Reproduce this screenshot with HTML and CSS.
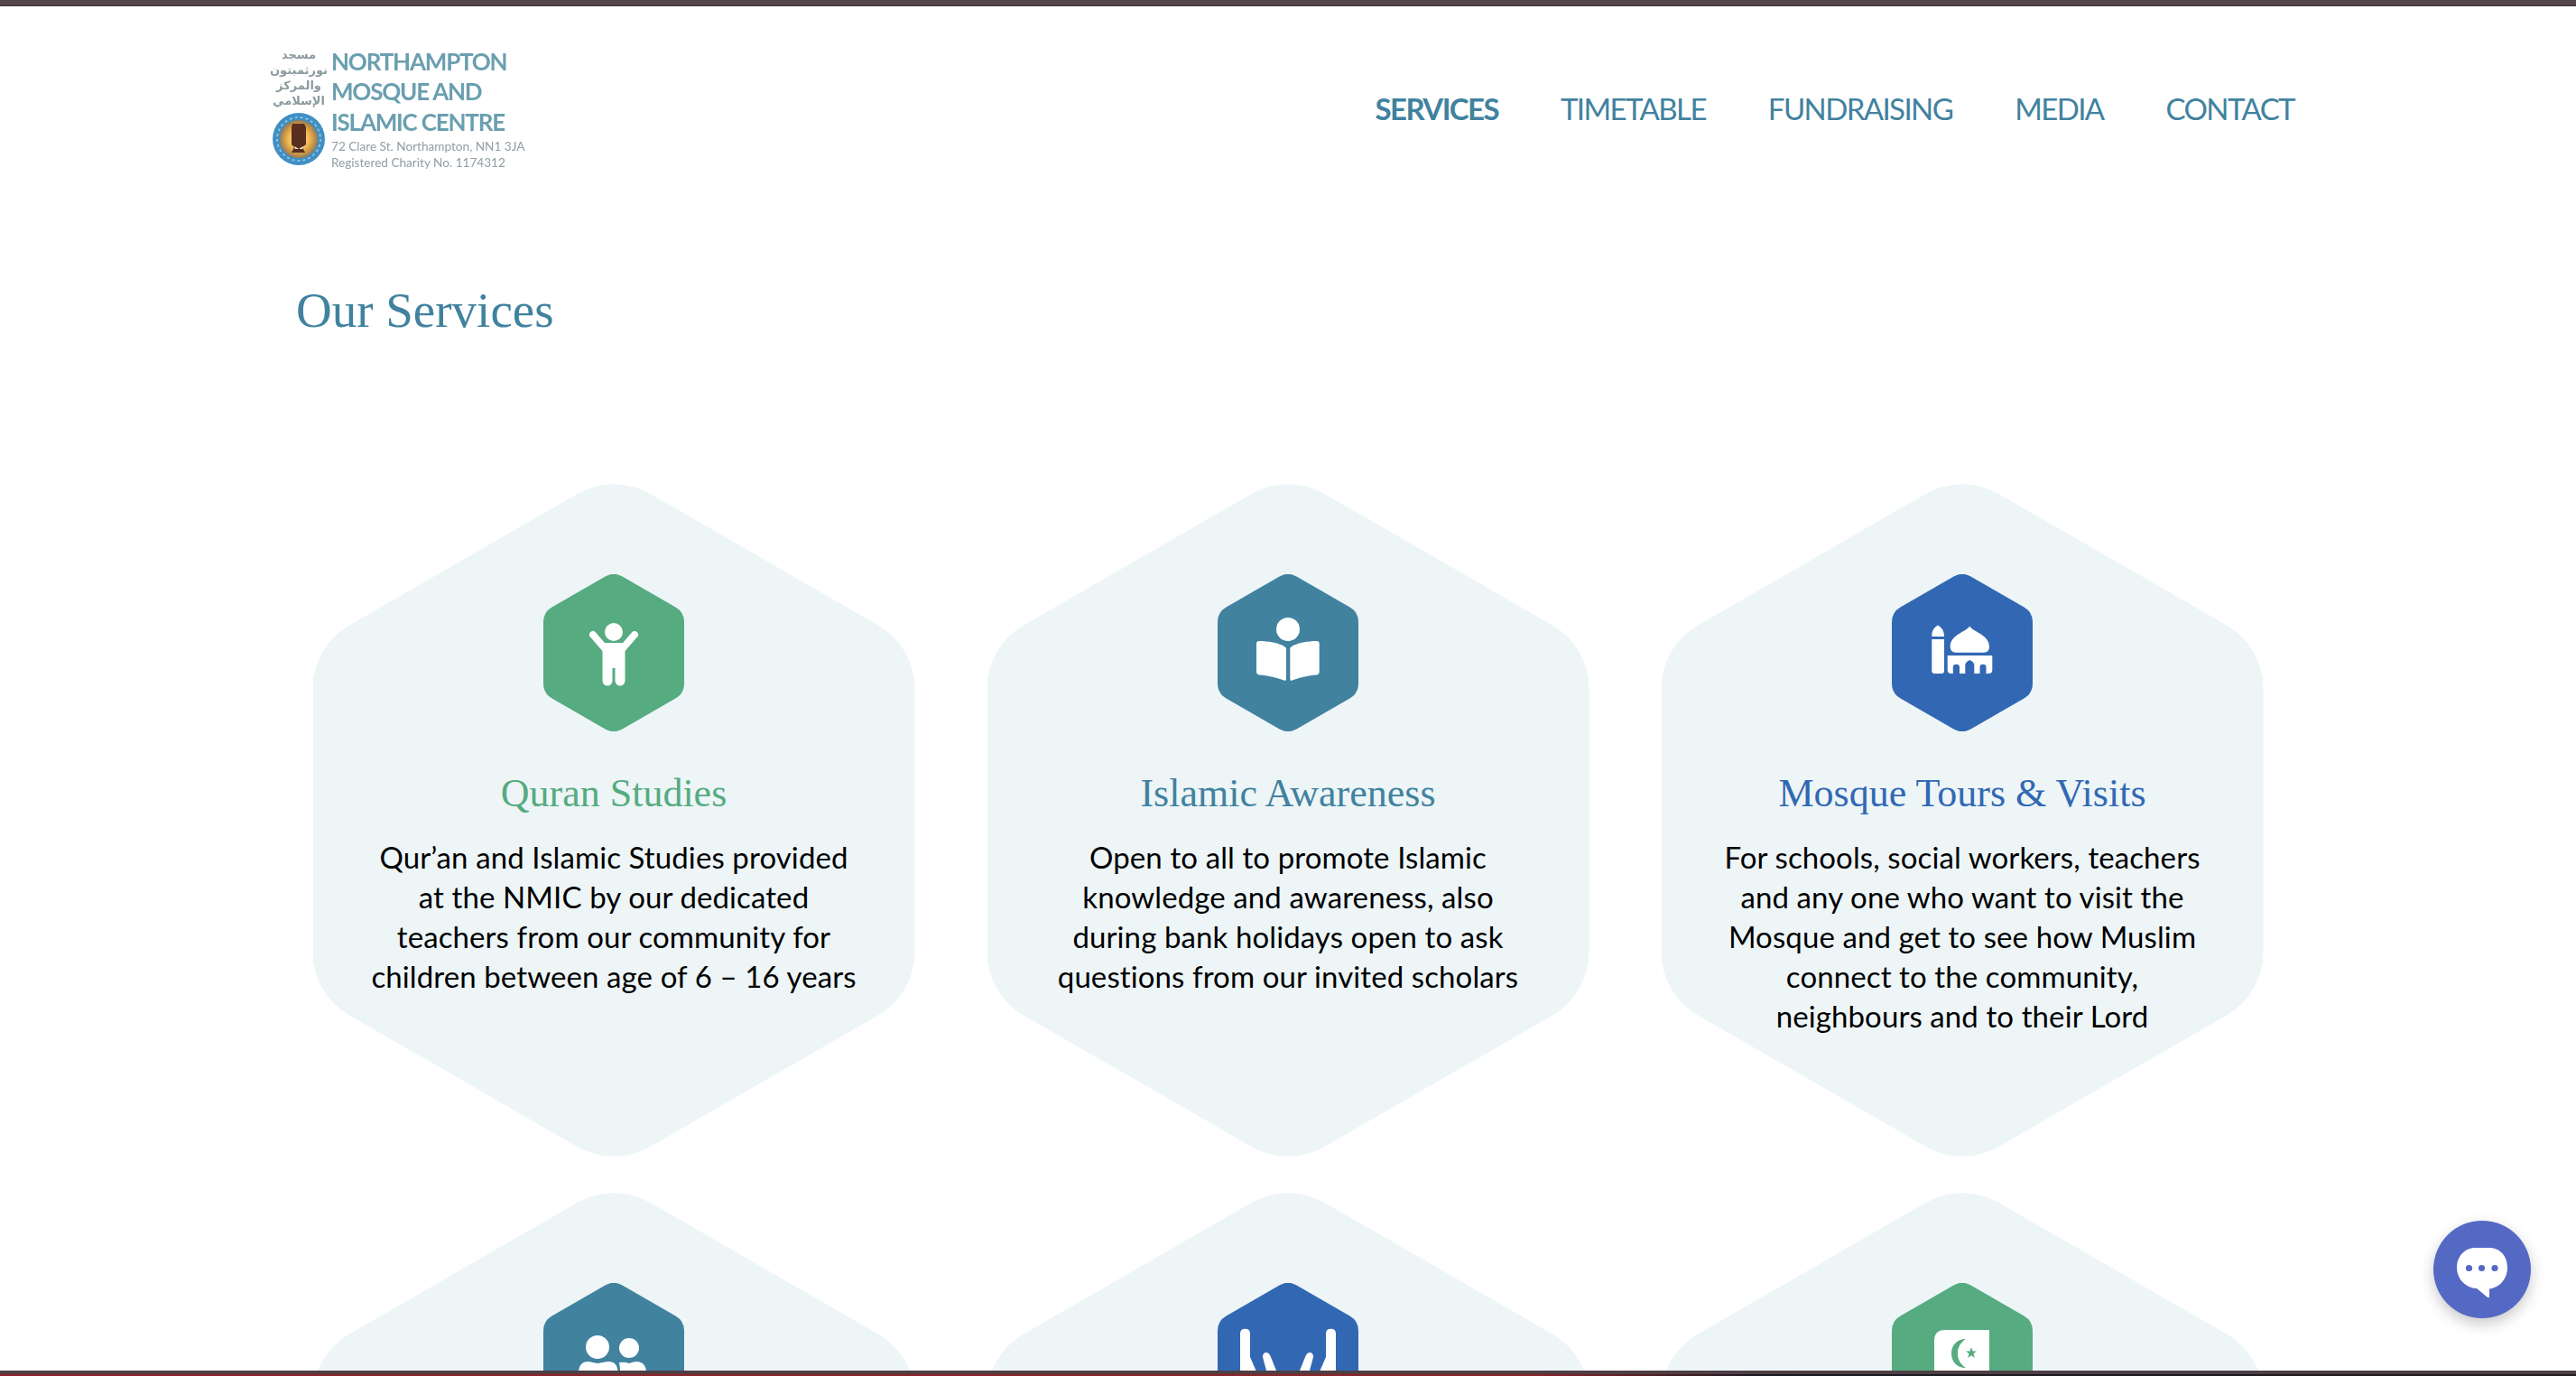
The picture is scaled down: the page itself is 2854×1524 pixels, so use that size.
FILE: index.html
```html
<!DOCTYPE html>
<html lang="en">
<head>
<meta charset="utf-8">
<title>Our Services - Northampton Mosque and Islamic Centre</title>
<link rel="stylesheet" href="styles.css">
</head>
<body>
<div class="topbar"></div>
<header class="site-header">
  <a class="logo" href="#">
    <div class="logo-left">
      <div class="logo-arabic" dir="rtl">مسجد<br>نورثمبتون<br>والمركز<br>الإسلامي</div>
      <svg class="logo-emblem" width="58" height="58" viewBox="0 0 58 58">
        <defs><radialGradient id="glow"><stop offset="0" stop-color="#fff6c4"/><stop offset=".6" stop-color="#eeb24a"/><stop offset="1" stop-color="#9c7a4e"/></radialGradient></defs>
        <circle cx="29" cy="29" r="29" fill="#3f8fc4"/>
        <circle cx="29" cy="29" r="24" fill="none" stroke="#8fc0dc" stroke-width="2" stroke-dasharray="3 3"/>
        <circle cx="29" cy="29" r="21" fill="url(#glow)"/>
        <path d="M22 12h13l2 4v19l-4 3 3 6H21l3-6-3-3V16z" fill="#5a2e1e"/>
        <path d="M24 37l5 3 5-3-1 3h-8z" fill="#f2f2ea"/>
      </svg>
    </div>
    <div class="logo-right">
      <div class="logo-name">NORTHAMPTON<br>MOSQUE AND<br>ISLAMIC CENTRE</div>
      <div class="logo-address">72 Clare St. Northampton, NN1 3JA<br>Registered Charity No. 1174312</div>
    </div>
  </a>
  <nav class="main-nav">
    <a class="nav-link active" href="#">SERVICES</a>
    <a class="nav-link" href="#">TIMETABLE</a>
    <a class="nav-link" href="#">FUNDRAISING</a>
    <a class="nav-link" href="#">MEDIA</a>
    <a class="nav-link" href="#">CONTACT</a>
  </nav>
</header>
<main class="services">
  <h1 class="page-title">Our Services</h1>
  <div class="service-grid">
    <article class="service-card">
      <svg class="hex-icon green" width="156" height="174" viewBox="0 0 156 174">
        <path class="hex-bg" d="M68.5 2.5A19 19 0 0 1 87.5 2.5L146.5 36.5A19 19 0 0 1 156 53V121A19 19 0 0 1 146.5 137.5L87.5 171.5A19 19 0 0 1 68.5 171.5L9.5 137.5A19 19 0 0 1 0 121V53A19 19 0 0 1 9.5 36.5Z"/>
        <circle class="glyph" cx="78" cy="64" r="10"/>
        <path class="glyph-line" d="M55 67 68 82M101 67 88 82"/>
        <path class="glyph" d="M65.5 76H90.5V118a5.500 5.500 0 0 1-11 0V104H76.500V118a5.500 5.500 0 0 1-11 0Z"/>
      </svg>
      <h2 class="card-title text-green">Quran Studies</h2>
      <p class="card-text">Qur’an and Islamic Studies provided<br>at the NMIC by our dedicated<br>teachers from our community for<br>children between age of 6 – 16 years</p>
    </article>
    <article class="service-card">
      <svg class="hex-icon teal" width="156" height="174" viewBox="0 0 156 174">
        <path class="hex-bg" d="M68.5 2.5A19 19 0 0 1 87.5 2.5L146.5 36.5A19 19 0 0 1 156 53V121A19 19 0 0 1 146.5 137.5L87.5 171.500A19 19 0 0 1 68.5 171.5L9.5 137.5A19 19 0 0 1 0 121V53A19 19 0 0 1 9.5 36.5Z"/>
        <circle class="glyph" cx="78" cy="61" r="13"/>
        <path class="glyph" d="M46 74C56 74 68 76 74 80Q76 81 76 83V116Q76 118.500 73.500 117.600C66 114.500 56 112 46 111.400Q43 111 43 108V77Q43 74 46 74Z"/>
        <path class="glyph" d="M110 74C100 74 88 76 82 80Q80.300 81 80.300 83V116Q80.300 118.500 82.800 117.600C90 114.500 100 112 110 111.400Q112.700 111 112.700 108V77Q112.700 74 110 74Z"/>
      </svg>
      <h2 class="card-title text-teal">Islamic Awareness</h2>
      <p class="card-text">Open to all to promote Islamic<br>knowledge and awareness, also<br>during bank holidays open to ask<br>questions from our invited scholars</p>
    </article>
    <article class="service-card">
      <svg class="hex-icon blue" width="156" height="174" viewBox="0 0 156 174">
        <path class="hex-bg" d="M68.5 2.5A19 19 0 0 1 87.5 2.5L146.5 36.5A19 19 0 0 1 156 53V121A19 19 0 0 1 146.5 137.5L87.5 171.500A19 19 0 0 1 68.5 171.5L9.5 137.5A19 19 0 0 1 0 121V53A19 19 0 0 1 9.5 36.5Z"/>
        <path class="glyph" d="M51 56.500C55 59 58 62 58 69H44.300C44.300 62 47 59 51 56.500ZM44.300 72H58V107Q58 110 55 110H47.300Q44.300 110 44.300 107Z"/>
        <path class="glyph" d="M86.300 57.500C90 64 108 67 108 80Q108 86.700 102 86.700H71Q64.700 86.700 64.700 80C64.700 67 82 64 86.300 57.500Z"/>
        <path class="glyph" d="M61.700 90H111.300V106Q111.300 110 107.300 110H104.500V103Q104.500 99.700 101 99.700 97.500 99.700 97.500 103V110H91.300V101Q91.300 97 86.300 95 81.300 97 81.300 101V110H75V103Q75 99.700 71.300 99.700 67.800 99.700 67.800 103V110H65.700Q61.700 110 61.700 106Z"/>
      </svg>
      <h2 class="card-title text-blue">Mosque Tours &amp; Visits</h2>
      <p class="card-text">For schools, social workers, teachers<br>and any one who want to visit the<br>Mosque and get to see how Muslim<br>connect to the community,<br>neighbours and to their Lord</p>
    </article>
    <article class="service-card">
      <svg class="hex-icon teal" width="156" height="174" viewBox="0 0 156 174">
        <path class="hex-bg" d="M68.5 2.5A19 19 0 0 1 87.5 2.5L146.5 36.5A19 19 0 0 1 156 53V121A19 19 0 0 1 146.5 137.5L87.5 171.500A19 19 0 0 1 68.5 171.5L9.5 137.5A19 19 0 0 1 0 121V53A19 19 0 0 1 9.5 36.5Z"/>
        <circle class="glyph" cx="60" cy="71" r="13"/>
        <circle class="glyph" cx="95" cy="72" r="11"/>
        <path class="glyph" d="M39 120V100Q39 87 50 87 55 88 60 89 65 88 72 87 82.600 87 82.600 100V120Z"/>
        <path class="glyph" d="M85 120V100Q85 92 84 88 90 87 95 89 100 87 104 87 114 88 114 100V120Z"/>
      </svg>
    </article>
    <article class="service-card">
      <svg class="hex-icon blue" width="156" height="174" viewBox="0 0 156 174">
        <path class="hex-bg" d="M68.5 2.5A19 19 0 0 1 87.5 2.5L146.5 36.5A19 19 0 0 1 156 53V121A19 19 0 0 1 146.5 137.5L87.5 171.500A19 19 0 0 1 68.5 171.5L9.5 137.5A19 19 0 0 1 0 121V53A19 19 0 0 1 9.5 36.5Z"/>
        <path class="glyph" d="M25 56Q25 50.700 30.500 50.700 36 50.700 36 56V82L49 112H25Z"/>
        <path class="glyph" d="M131 56Q131 50.700 125.500 50.700 120 50.700 120 56V82L107 112H131Z"/>
        <path class="glyph" d="M50 82Q50 77 54 77 57 77 59 82L71 112H58Z"/>
        <path class="glyph" d="M106 82Q106 77 102 77 99 77 97 82L85 112H98Z"/>
      </svg>
    </article>
    <article class="service-card">
      <svg class="hex-icon green" width="156" height="174" viewBox="0 0 156 174">
        <path class="hex-bg" d="M68.5 2.5A19 19 0 0 1 87.5 2.5L146.5 36.5A19 19 0 0 1 156 53V121A19 19 0 0 1 146.5 137.5L87.5 171.500A19 19 0 0 1 68.5 171.5L9.5 137.5A19 19 0 0 1 0 121V53A19 19 0 0 1 9.5 36.5Z"/>
        <path class="glyph" d="M59 52H108V130H47V64Q47 52 59 52Z"/>
        <path class="hex-bg" d="M82 62C72 62 66 69 66 78 66 87 72 94 82 94 76 90 73 85 73 78 73 71 76 66 82 62Z"/>
        <path class="hex-bg" d="M88 71 89.600 75.400 94 75.400 90.500 78.300 91.800 83 88 80.200 84.200 83 85.500 78.300 82 75.400 86.400 75.400Z"/>
      </svg>
    </article>
  </div>
</main>
<div class="bottombar"></div>
<button class="chat-button" type="button" aria-label="Open chat">
  <svg width="60" height="64" viewBox="0 -5.500 60 64">
    <path d="M22 2.500H38C50 2.500 58 12 58 24.500 58 38 48 47 38 48V56Q38 59 35.500 57L24 47.500C12 47 2 37 2 24.500 2 12 11 2.500 22 2.500Z" fill="#fff"/>
    <circle cx="15.500" cy="25" r="3.600" fill="#5469c4"/><circle cx="29.500" cy="25" r="3.600" fill="#5469c4"/><circle cx="44" cy="25" r="3.600" fill="#5469c4"/>
  </svg>
</button>
</body>
</html>
```
FILE: styles.css
```css
* { box-sizing: border-box; }
html, body { margin: 0; height: 100%; overflow: hidden; background: #fff; }
body { font-family: "Lato", "Liberation Sans", sans-serif; color: #000; }
a { text-decoration: none; color: inherit; }

.topbar { height: 7px; background: #54464b; border-bottom: 1px solid #3d3237; }

.site-header {
  height: 226px;
  display: flex;
  align-items: center;
  justify-content: space-between;
  padding: 0 312px 0 302px;
}
.logo { display: flex; gap: 7px; filter: blur(.6px); }
.logo-left { display: flex; flex-direction: column; align-items: center; width: 58px; gap: 5px; padding-top: 1px; }
.logo-arabic {
  font-family: "DejaVu Sans", sans-serif;
  font-size: 13px;
  font-weight: 700;
  line-height: 17px;
  color: #8b9a9f;
  text-align: center;
  white-space: nowrap;
}
.logo-right { padding-top: 1px; }
.logo-name {
  font-weight: 700;
  font-size: 26px;
  line-height: 33.5px;
  color: #6a9fb0;
  letter-spacing: -1.2px;
  white-space: nowrap;
}
.logo-address {
  font-size: 13.6px;
  line-height: 18px;
  color: #8f9ea6;
  white-space: nowrap;
  margin-top: 1px;
}
.main-nav { display: flex; gap: 69px; }
.nav-link { font-size: 33px; line-height: 40px; color: #41829f; white-space: nowrap; letter-spacing: -1.6px; }
.nav-link.active { font-weight: 700; }

.services { padding: 81px 0 0 328px; }
.page-title {
  margin: 0 0 162px;
  font-family: "Liberation Serif", serif;
  font-weight: 400;
  font-size: 55px;
  line-height: 60px;
  color: #41829f;
}
.service-grid {
  display: grid;
  grid-template-columns: repeat(3, 667px);
  column-gap: 80px;
  row-gap: 40px;
  margin-left: 18.5px;
}
.service-card {
  height: 745px;
  padding-top: 100px;
  background: #edf5f7;
  text-align: center;
  clip-path: path("M293 11A81 81 0 0 1 374 11L626.5 156.6A81 81 0 0 1 667 227V518A81 81 0 0 1 626.5 588.4L374 734A81 81 0 0 1 293 734L40.5 588.4A81 81 0 0 1 0 518V227A81 81 0 0 1 40.5 156.6Z");
}
.hex-icon { display: block; margin: 0 auto; }
.green .hex-bg { fill: #56ab80; }
.teal .hex-bg { fill: #41829f; }
.blue .hex-bg { fill: #3268b3; }
.glyph { fill: #fff; }
.glyph-line { fill: none; stroke: #fff; stroke-width: 8; stroke-linecap: round; }

.card-title {
  margin: 44px 0 23px;
  font-family: "Liberation Serif", serif;
  font-weight: 400;
  font-size: 44px;
  line-height: 50px;
}
.text-green { color: #56ab80; }
.text-teal { color: #41829f; }
.text-blue { color: #3268b3; }
.card-text { margin: 0; font-size: 33px; line-height: 44px; white-space: nowrap; letter-spacing: .1px; }

.bottombar {
  position: fixed;
  left: 0; right: 0; bottom: 0;
  height: 6px;
  border-top: 4px solid #4e3f44;
  background: linear-gradient(90deg, #8c2329 0, #8c2329 1700px, #1a1a22 1950px, #231c20 100%);
}
.chat-button {
  position: fixed;
  left: 2696px;
  top: 1352px;
  width: 108px;
  height: 108px;
  border: 0;
  padding: 0;
  border-radius: 50%;
  background: #5469c4;
  box-shadow: 0 6px 16px rgba(0,0,0,.22);
  display: flex;
  align-items: center;
  justify-content: center;
}
```
